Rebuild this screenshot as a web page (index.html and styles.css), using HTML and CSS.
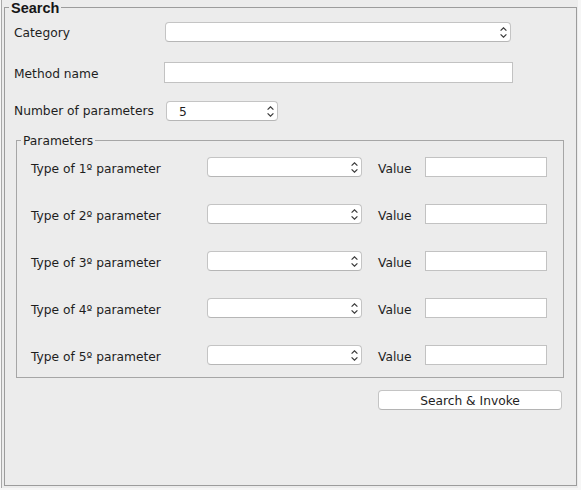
FILE: index.html
```html
<!DOCTYPE html>
<html lang="en">
<head>
<meta charset="utf-8">
<title>Search</title>
<link rel="stylesheet" href="styles.css">
</head>
<body>
<div class="frame">
  <fieldset class="search">
    <legend class="search-legend">Search</legend>
    <div class="row row-category">
      <label class="label">Category</label>
      <div class="select select-category">
        <span class="select-value"></span>
        <svg class="chev" width="7" height="11" viewBox="0 0 7 11"><path d="M0.6 3.6 L3.5 0.8 L6.4 3.6 M0.6 7.4 L3.5 10.2 L6.4 7.4" fill="none" stroke="#3a3a3a" stroke-width="1.2"/></svg>
      </div>
    </div>
    <div class="row row-method">
      <label class="label">Method name</label>
      <input type="text" class="field field-method">
    </div>
    <div class="row row-number">
      <label class="label">Number of parameters</label>
      <div class="select select-number">
        <span class="select-value">5</span>
        <svg class="chev" width="7" height="11" viewBox="0 0 7 11"><path d="M0.6 3.6 L3.5 0.8 L6.4 3.6 M0.6 7.4 L3.5 10.2 L6.4 7.4" fill="none" stroke="#3a3a3a" stroke-width="1.2"/></svg>
      </div>
    </div>

    <fieldset class="params">
      <legend class="params-legend">Parameters</legend>
      <div class="prow">
        <span class="plabel">Type of 1º parameter</span>
        <div class="select select-type"><span class="select-value"></span><svg class="chev" width="7" height="11" viewBox="0 0 7 11"><path d="M0.6 3.6 L3.5 0.8 L6.4 3.6 M0.6 7.4 L3.5 10.2 L6.4 7.4" fill="none" stroke="#3a3a3a" stroke-width="1.2"/></svg></div>
        <span class="vlabel">Value</span>
        <input type="text" class="field field-value">
      </div>
      <div class="prow">
        <span class="plabel">Type of 2º parameter</span>
        <div class="select select-type"><span class="select-value"></span><svg class="chev" width="7" height="11" viewBox="0 0 7 11"><path d="M0.6 3.6 L3.5 0.8 L6.4 3.6 M0.6 7.4 L3.5 10.2 L6.4 7.4" fill="none" stroke="#3a3a3a" stroke-width="1.2"/></svg></div>
        <span class="vlabel">Value</span>
        <input type="text" class="field field-value">
      </div>
      <div class="prow">
        <span class="plabel">Type of 3º parameter</span>
        <div class="select select-type"><span class="select-value"></span><svg class="chev" width="7" height="11" viewBox="0 0 7 11"><path d="M0.6 3.6 L3.5 0.8 L6.4 3.6 M0.6 7.4 L3.5 10.2 L6.4 7.4" fill="none" stroke="#3a3a3a" stroke-width="1.2"/></svg></div>
        <span class="vlabel">Value</span>
        <input type="text" class="field field-value">
      </div>
      <div class="prow">
        <span class="plabel">Type of 4º parameter</span>
        <div class="select select-type"><span class="select-value"></span><svg class="chev" width="7" height="11" viewBox="0 0 7 11"><path d="M0.6 3.6 L3.5 0.8 L6.4 3.6 M0.6 7.4 L3.5 10.2 L6.4 7.4" fill="none" stroke="#3a3a3a" stroke-width="1.2"/></svg></div>
        <span class="vlabel">Value</span>
        <input type="text" class="field field-value">
      </div>
      <div class="prow">
        <span class="plabel">Type of 5º parameter</span>
        <div class="select select-type"><span class="select-value"></span><svg class="chev" width="7" height="11" viewBox="0 0 7 11"><path d="M0.6 3.6 L3.5 0.8 L6.4 3.6 M0.6 7.4 L3.5 10.2 L6.4 7.4" fill="none" stroke="#3a3a3a" stroke-width="1.2"/></svg></div>
        <span class="vlabel">Value</span>
        <input type="text" class="field field-value">
      </div>
    </fieldset>

    <div class="actions">
      <button type="button" class="btn">Search &amp; Invoke</button>
    </div>
  </fieldset>
</div>
</body>
</html>
```

FILE: styles.css
```css
* { box-sizing: border-box; }

html, body {
  margin: 0;
  padding: 0;
  background: #f6f6f6;
}

body {
  font-family: "DejaVu Sans", "Liberation Sans", sans-serif;
  font-size: 12.25px;
  color: #1e1e1e;
}

.frame {
  width: 577px;
  height: 488px;
  margin-left: 1px;
  border-left: 1px solid #a9a9a9;
  background: #ececec;
  display: flex;
  flex-direction: column;
  padding-bottom: 2px;
}

.search {
  flex: 1;
  margin: -1px 1px 0 2px;
  padding: 0;
  border: 1px solid #9c9c9c;
  min-width: 0;
}

.search-legend {
  margin-left: 4px;
  padding: 2px 2px 0 2px;
  font-family: "Liberation Sans", "DejaVu Sans", sans-serif;
  font-weight: bold;
  font-size: 14.5px;
  line-height: 14px;
  color: #161616;
}

.row {
  display: flex;
  align-items: center;
  padding-left: 9px;
}

.label {
  width: 150px;
  flex: none;
}

.row-category { margin-top: 7px; height: 20px; }
.row-category .label { padding-top: 2px; }
.row-method { margin-top: 20px; height: 21px; }
.row-method .label { padding-top: 3px; }
.row-number { margin-top: 18px; height: 20px; }
.row-number .label { padding-bottom: 1px; }

.select {
  display: flex;
  align-items: center;
  justify-content: space-between;
  height: 20px;
  background: #ffffff;
  border: 1px solid #c4c4c4;
  border-bottom-color: #b6b6b6;
  border-radius: 4px;
  padding: 0 3px 0 12px;
  flex: none;
}

.select-category { width: 346px; margin-left: 1px; }
.select-number { width: 112px; margin-left: 2px; }
.select-type { width: 155px; }

.select-value {
  line-height: 18px;
  padding-top: 1px;
}

.chev { display: block; flex: none; }

.field {
  display: block;
  margin: 0;
  padding: 0 4px;
  background: #ffffff;
  border: 1px solid #c2c2c2;
  border-radius: 0;
  font: inherit;
  outline: none;
  flex: none;
}

.field-method { width: 349px; height: 21px; }

.params {
  margin: 12px 12px 0 11px;
  padding: 0 0 12px 0;
  border: 1px solid #a6a6a6;
  min-width: 0;
}

.params-legend {
  margin-left: 4px;
  padding: 2px 2px 0 2px;
  font-size: 12.25px;
  line-height: 12px;
}

.prow {
  display: flex;
  align-items: center;
  height: 20px;
  margin-top: 27px;
  padding-left: 14px;
}

.prow:first-of-type { margin-top: 10px; }

.plabel { width: 176px; flex: none; padding-top: 4px; }

.vlabel { width: 47px; margin-left: 16px; flex: none; padding-top: 4px; }

.field-value { width: 122px; height: 20px; }

.actions {
  display: flex;
  margin-top: 12px;
  padding-left: 373px;
}

.btn {
  width: 184px;
  height: 20px;
  margin: 0;
  padding: 2px 0 0 0;
  background: #ffffff;
  border: 1px solid #c4c4c4;
  border-bottom-color: #b4b4b4;
  border-radius: 4px;
  font: inherit;
  color: #1e1e1e;
  line-height: 16px;
}
```
